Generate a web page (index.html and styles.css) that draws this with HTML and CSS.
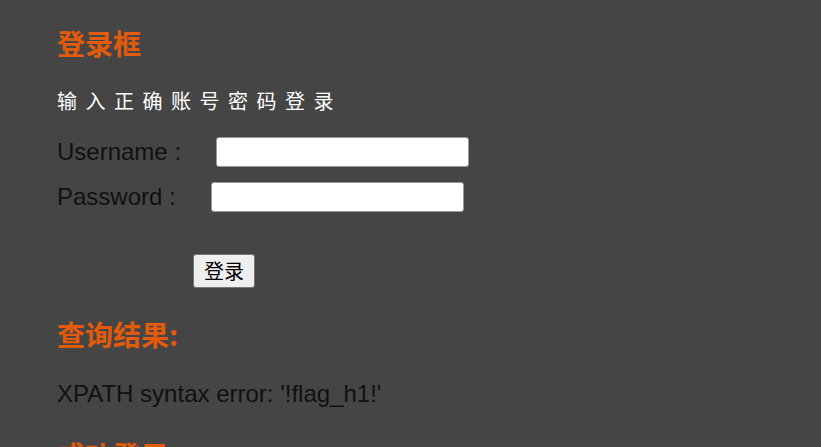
FILE: index.html
```html
<!DOCTYPE html>
<html lang="zh">
<head>
<meta charset="utf-8">
<link rel="stylesheet" href="styles.css">
</head>
<body>
<main class="page">
  <h2 class="title title-login">登录框</h2>
  <p class="hint">输入正确账号密码登录</p>
  <form class="form">
    <div class="row row-user"><span class="label">Username :</span><input class="field" type="text"></div>
    <div class="row row-pass"><span class="label">Password :</span><input class="field" type="password"></div>
    <div class="actions"><button class="btn" type="button">登录</button></div>
  </form>
  <h2 class="title title-result">查询结果:</h2>
  <p class="result">XPATH syntax error: '!flag_h1!'</p>
  <h2 class="title title-ok">成功登录</h2>
</main>
</body>
</html>
```
FILE: styles.css
```css
html, body {
  margin: 0;
  padding: 0;
  background: #454545;
  height: 100%;
}
body {
  font-family: "Liberation Sans", Arial, "Noto Sans CJK SC", sans-serif;
  overflow: hidden;
}
.page {
  padding: 26px 0 0 57px;
}
.title {
  margin: 0;
  font-size: 28px;
  line-height: 34px;
  font-weight: bold;
  color: #e25b0b;
  font-family: "Noto Sans CJK SC", sans-serif;
}
.hint {
  margin: 27px 0 0;
  font-size: 20px;
  line-height: 28px;
  color: #ffffff;
  letter-spacing: 8.5px;
  font-family: "Noto Sans CJK SC", sans-serif;
}
.form {
  margin: 14px 0 0;
}
.row {
  display: flex;
  align-items: center;
  height: 45px;
}
.label {
  font-size: 24px;
  color: #111;
  margin-right: 35px;
}
.field {
  width: 253px;
  height: 30px;
  box-sizing: border-box;
  border: 1px solid #999;
  border-radius: 3px;
  background: #fff;
  padding: 0;
  margin: 0;
}
.actions {
  padding: 35px 0 0 136px;
}
.btn {
  width: 62px;
  height: 34px;
  font-size: 20px;
  font-family: "Noto Sans CJK SC", sans-serif;
  background: #efefef;
  border: 1px solid #767676;
  border-radius: 3px;
  color: #000;
  padding: 0;
  line-height: 1;
}
.title-result {
  margin-top: 29px;
}
.result {
  margin: 29px 0 0;
  font-size: 24px;
  line-height: 28px;
  color: #111;
}
.title-ok {
  margin-top: 30px;
}
```
